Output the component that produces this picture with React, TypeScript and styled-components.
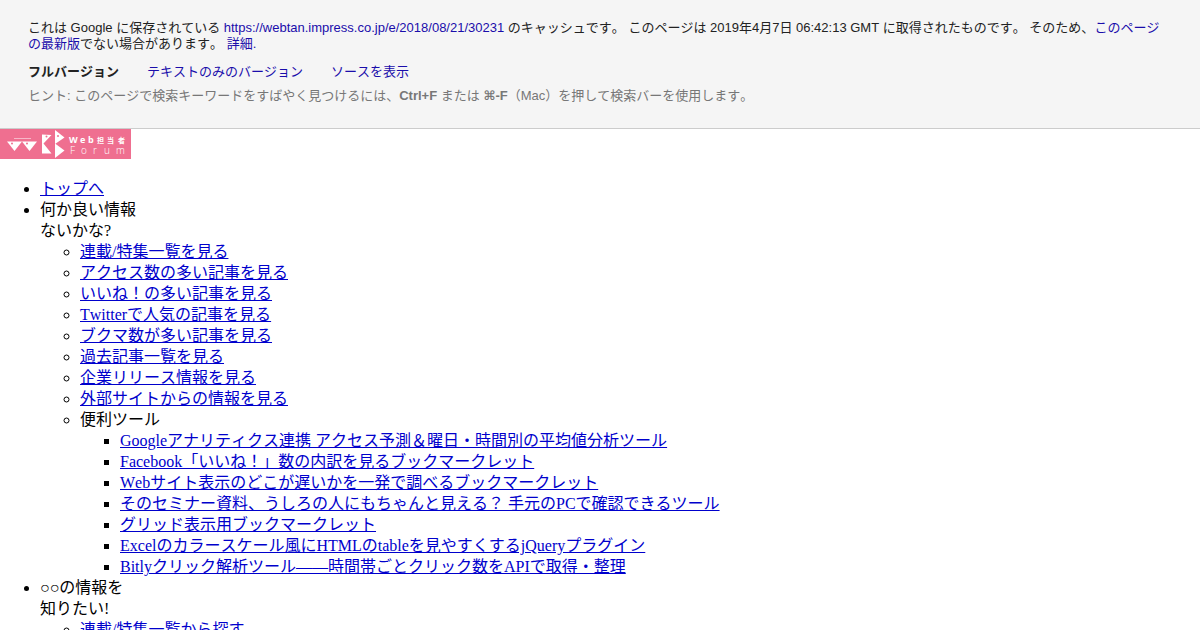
import React from "react";
import styled, { createGlobalStyle } from "styled-components";

const GlobalStyle = createGlobalStyle`
  body {
    margin: 0;
    background: #fff;
    color: #000;
    font: 16px/21px "Liberation Serif", "Noto Sans CJK JP", serif;
    font-kerning: none;
  }
`;

const CacheBanner = styled.header`
  padding: 20px 36px 24px 28px;
  border-bottom: 1px solid #ccc;
  background: #f5f5f5;
  color: #222;
  font: 13px/16px "Liberation Sans", "DejaVu Sans", "Noto Sans CJK JP", sans-serif;
  font-kerning: none;
`;

const Notice = styled.p`
  margin: 0;
`;

const BannerLink = styled.a`
  color: #1a0dab;
  text-decoration: none;
`;

const Versions = styled.nav`
  display: flex;
  gap: 28px;
  margin: 12px 0 8px;
`;

const Hint = styled.p`
  margin: 0;
  color: #777;
`;

const LogoLink = styled.a`
  display: block;
  width: 131px;
`;

const LogoDrawing = styled.svg`
  display: block;
`;

const MenuList = styled.ul<{ $marker: "disc" | "circle" | "square"; $top?: boolean }>`
  margin: ${(p) => (p.$top ? "19px 0 16px" : "0")};
  padding-left: 40px;
  list-style-type: ${(p) => p.$marker};
`;

const MenuLink = styled.a`
  color: #0000cc;
  text-decoration: underline;
`;

const articles = [
  "連載/特集一覧を見る",
  "アクセス数の多い記事を見る",
  "いいね！の多い記事を見る",
  "Twitterで人気の記事を見る",
  "ブクマ数が多い記事を見る",
  "過去記事一覧を見る",
  "企業リリース情報を見る",
  "外部サイトからの情報を見る",
];

const tools = [
  "Googleアナリティクス連携 アクセス予測＆曜日・時間別の平均値分析ツール",
  "Facebook「いいね！」数の内訳を見るブックマークレット",
  "Webサイト表示のどこが遅いかを一発で調べるブックマークレット",
  "そのセミナー資料、うしろの人にもちゃんと見える？ 手元のPCで確認できるツール",
  "グリッド表示用ブックマークレット",
  "Excelのカラースケール風にHTMLのtableを見やすくするjQueryプラグイン",
  "Bitlyクリック解析ツール――時間帯ごとクリック数をAPIで取得・整理",
];

function LinkItems({ labels }: { labels: string[] }) {
  return (
    <>
      {labels.map((label) => (
        <li key={label}>
          <MenuLink href="#">{label}</MenuLink>
        </li>
      ))}
    </>
  );
}

function Logo() {
  return (
    <LogoDrawing width="131" height="30" viewBox="0 0 131 30" role="img" aria-label="Web担当者Forum">
      <rect width="131" height="30" fill="#ef6f90" />
      <g fill="#fff">
        <path d="M7 12.500H22L14.500 22Z" />
        <path d="M22 12.500H37L29.500 22Z" />
        <path d="M42 5.500L51.500 6L43.500 14.500L51.500 24.500H42Z" />
        <path d="M55 1L64.500 8.500L55 15Z" />
        <path d="M55 14.500L64.500 21.500L55 29Z" />
        <rect x="14" y="9" width="17" height="1" opacity="0.5" />
      </g>
      <g fill="#ef6f90">
        <circle cx="12" cy="14.500" r="1" />
        <circle cx="27" cy="14.500" r="1" />
        <circle cx="46.500" cy="7.500" r="1" />
        <circle cx="58" cy="7" r="1" />
      </g>
      <g fill="#fff" fontFamily='"Open Sans", "Noto Sans CJK JP", sans-serif'>
        <text x="69 80 88" y="14" fontSize="9" fontWeight="700">Web</text>
        <text x="97 107 118" y="14" fontSize="7" fontWeight="700">担当者</text>
        <text x="70 81 93 104 116" y="25" fontSize="10" fontWeight="300">Forum</text>
      </g>
    </LogoDrawing>
  );
}

export default function App() {
  return (
    <>
      <GlobalStyle />
      <CacheBanner lang="ja">
        <Notice>
          これは Google に保存されている{" "}
          <BannerLink href="https://webtan.impress.co.jp/e/2018/08/21/30231">
            https://webtan.impress.co.jp/e/2018/08/21/30231
          </BannerLink>{" "}
          のキャッシュです。 このページは 2019年4月7日 06:42:13 GMT に取得されたものです。 そのため、
          <BannerLink href="#">このページの最新版</BannerLink>でない場合があります。{" "}
          <BannerLink href="#">詳細.</BannerLink>
        </Notice>
        <Versions>
          <strong>フルバージョン</strong>
          <BannerLink href="#">テキストのみのバージョン</BannerLink>
          <BannerLink href="#">ソースを表示</BannerLink>
        </Versions>
        <Hint>
          ヒント: このページで検索キーワードをすばやく見つけるには、<b>Ctrl+F</b> または <b>⌘-F</b>
          （Mac）を押して検索バーを使用します。
        </Hint>
      </CacheBanner>
      <main lang="ja">
        <LogoLink href="#">
          <Logo />
        </LogoLink>
        <MenuList $marker="disc" $top>
          <li>
            <MenuLink href="#">トップへ</MenuLink>
          </li>
          <li>
            何か良い情報
            <br />
            ないかな?
            <MenuList $marker="circle">
              <LinkItems labels={articles} />
              <li>
                便利ツール
                <MenuList $marker="square">
                  <LinkItems labels={tools} />
                </MenuList>
              </li>
            </MenuList>
          </li>
          <li>
            ○○の情報を
            <br />
            知りたい!
            <MenuList $marker="circle">
              <LinkItems labels={["連載/特集一覧から探す"]} />
            </MenuList>
          </li>
        </MenuList>
      </main>
    </>
  );
}
